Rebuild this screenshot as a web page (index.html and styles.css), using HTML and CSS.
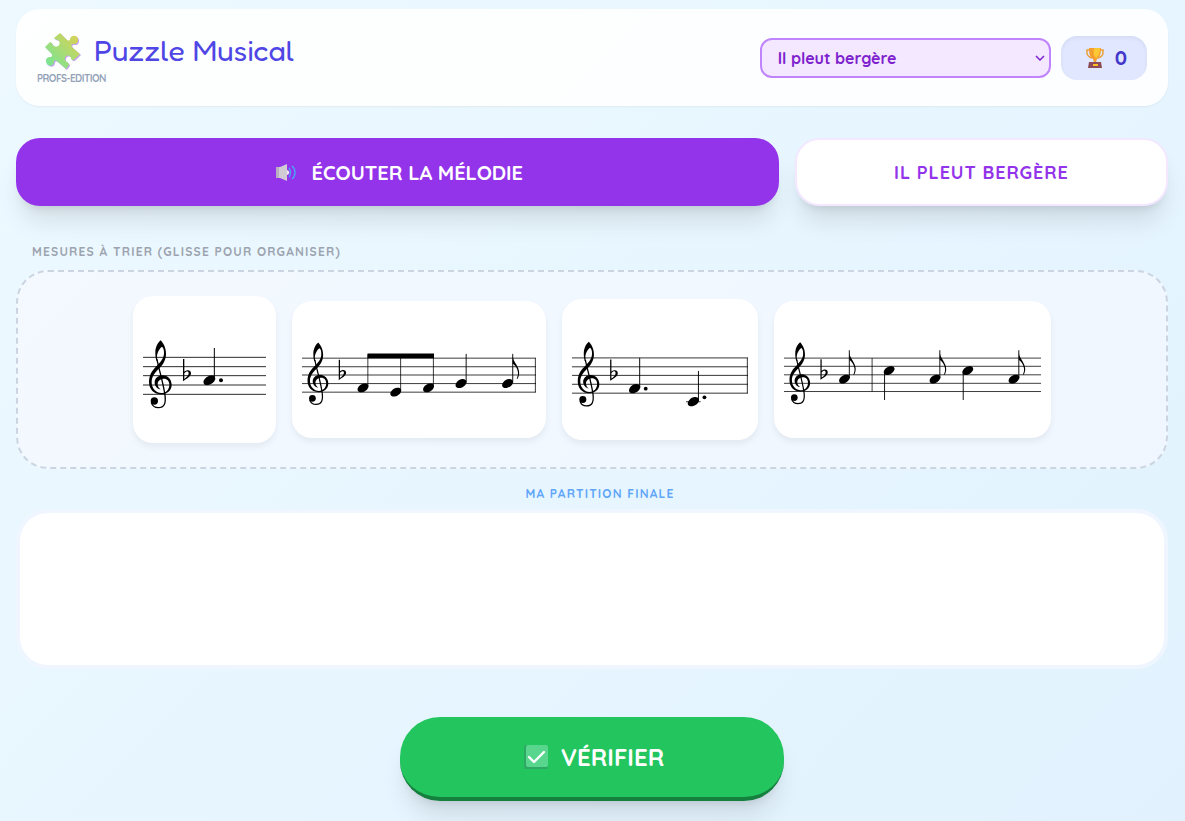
FILE: index.html
```html
<!DOCTYPE html>
<html lang="fr">
<head>
    <meta charset="UTF-8">
    <meta name="viewport" content="width=device-width, initial-scale=1.0">
    <title>Puzzle Musical</title>
    <link rel="stylesheet" href="styles.css">
</head>
<body>
    <!-- Shared music glyphs, one staff space = 28 units -->
    <svg class="glyphs" width="0" height="0" aria-hidden="true">
        <defs>
            <g id="clef">
                <path d="M53 103C62 112 70 128 69 146C68 166 57 179 46 190C34 202 26 213 26 228C26 248 40 261 55 261C69 261 79 250 79 236C79 224 71 217 61 218C50 219 43 227 44 236C45 243 48 247 53 250C44 250 35 240 35 230C35 217 46 208 58 208C74 208 86 220 86 237C86 254 72 265 54 265C33 265 18 250 18 228C18 209 26 195 38 183C52 168 63 158 63 140C63 131 61 125 57 122C48 128 42 142 42 152C42 156 43 160 44 164L40 164C38 156 37 150 37 140C37 124 44 110 53 103Z"/>
                <path d="M42 160C47 188 60 226 66 268C69 292 64 305 46 305C36 305 28 300 25 290" fill="none" stroke="#000" stroke-width="4"/>
                <circle cx="34" cy="285" r="11"/>
                <path fill-rule="evenodd" d="M120 159h4v38c7-6 20-7 20 5c0 10-13 16-24 24zM124 202v17c7-5 13-11 13-17c0-8-8-7-13 0z"/>
            </g>
            <path id="head" transform="scale(3.6) translate(-4.9 0)" d="M6.09-4.05c.36-.03 1.2 0 1.53.06c1.17.24 1.89.84 2.16 1.83c.06.18.06.3.06.66c0 .45 0 .63-.15 1.08c-.66 2.04-3.06 3.93-5.52 4.38c-.54.09-1.44.09-1.83.03c-1.23-.27-1.98-.87-2.25-1.86c-.06-.18-.06-.3-.06-.66c0-.45 0-.63.15-1.08c.24-.78.75-1.53 1.44-2.22c1.2-1.2 2.85-2.01 4.47-2.22z"/>
            <path id="flag" d="M0 8c2 20 21 32 21 54c0 8-2 13-5 19h-3c3-7 5-13 4-21c-1-12-10-24-17-28z"/>
        </defs>
    </svg>

    <div class="container">
        <header class="header">
            <div class="brand">
                <div class="brand-row">
                    <svg class="logo" viewBox="-3 1 48 44" aria-hidden="true">
                        <defs>
                            <linearGradient id="puzzle" x1="0" y1="1" x2="1" y2="0">
                                <stop offset="0" stop-color="#6ee79a"/>
                                <stop offset="1" stop-color="#e0d050"/>
                            </linearGradient>
                            <path id="piece" d="M20 5L26 11C28 13 30 13 30 11C31 6 39 7 38 13C37 17 34 16 32 16C31 17 31 18 33 20L40 26L35 31C33 33 31 32 31 30C30 26 24 27 25 32C26 34 29 34 29 37L26 41L18 34C16 32 14 32 14 34C14 39 6 39 6 33C6 29 9 29 11 29C13 28 12 26 11 25L5 19L10 14C12 14 12 17 14 18C18 20 21 16 19 13C18 11 15 12 14 10Z"/>
                        </defs>
                        <use href="#piece" x="1" y="1" fill="#c9a0f0"/>
                        <use href="#piece" fill="url(#puzzle)"/>
                    </svg>
                    <h1>Puzzle Musical</h1>
                </div>
                <span class="edition">PROFS-EDITION</span>
            </div>
            <div class="controls">
                <select id="songSelect" aria-label="Choisir une mélodie">
                    <option>Il pleut bergère</option>
                </select>
                <div class="score">
                    <svg class="trophy" viewBox="0 0 20 22" aria-hidden="true">
                        <path d="M5 3H2v3c0 3 2 4 5 5M15 3h3v3c0 3-2 4-5 5" fill="none" stroke="#e9a13b" stroke-width="1.5"/>
                        <path d="M4 1h12c0 6-1 9-4 11l-1 3h-2l-1-3C5 10 4 7 4 1z" fill="#f59e2e"/>
                        <path d="M9 1h6c0 5-1 8-4 10C9 9 8 6 9 1z" fill="#fcc934"/>
                        <path d="M4 15h12l1 6H3z" fill="#8d4a58"/>
                        <path d="M8 17h5v2H8z" fill="#fbbf24"/>
                    </svg>
                    <span id="score">0</span>
                </div>
            </div>
        </header>

        <div class="actions">
            <button class="listen" type="button">
                <svg class="speaker" viewBox="0 0 22 20" aria-hidden="true">
                    <path d="M1 5h4l7-3v17l-7-3H1z" fill="#d1cbd6"/>
                    <path d="M1 5h3v11H1z" fill="#b8b0c0"/>
                    <path d="M12 8c3 1 3 4 0 5z" fill="#eee"/>
                    <path d="M14 6c2 3 2 6 0 9M17 4c4 3 4 10 0 13" fill="none" stroke="#4aa3f5" stroke-width="1.4"/>
                </svg>
                <span>ÉCOUTER LA MÉLODIE</span>
            </button>
            <div class="song-title">IL PLEUT BERGÈRE</div>
        </div>

        <section>
            <h2 class="label">MESURES À TRIER (GLISSE POUR ORGANISER)</h2>
            <div class="pool">
                <div class="measure" draggable="true">
                    <svg width="123" height="127" viewBox="0 0 369 381">
                        <path class="line" d="M0 154H369M0 182H369M0 209H369M0 237H369M0 265H369"/>
                        <use href="#clef"/>
                        <use href="#head" x="199" y="223"/>
                        <path class="stem" d="M214 126V220"/>
                        <circle cx="234" cy="223" r="6"/>
                    </svg>
                </div>
                <div class="measure" draggable="true">
                    <svg width="234" height="117" viewBox="0 0 764 382">
                        <path class="line" d="M0 154H764M0 182H764M0 209H764M0 237H764M0 265H764M762 154V265"/>
                        <use href="#clef"/>
                        <use href="#head" x="199" y="251"/>
                        <use href="#head" x="306" y="265"/>
                        <use href="#head" x="413" y="251"/>
                        <use href="#head" x="519" y="237"/>
                        <use href="#head" x="671" y="237"/>
                        <path class="line" d="M215 142V248M322 142V262M429 142V248"/>
                        <path d="M214 139H431V154H214z"/>
                        <path class="stem" d="M536 140V234M688 140V234"/>
                        <use href="#flag" x="688" y="140"/>
                    </svg>
                </div>
                <div class="measure" draggable="true">
                    <svg width="176" height="121" viewBox="0 0 554 381">
                        <path class="line" d="M0 154H554M0 182H554M0 209H554M0 237H554M0 265H554M552 154V265M359 292H405"/>
                        <use href="#clef"/>
                        <use href="#head" x="197" y="251"/>
                        <path class="stem" d="M213 154V248M398 195V288"/>
                        <circle cx="232" cy="251" r="6"/>
                        <use href="#head" x="382" y="292"/>
                        <circle cx="417" cy="278" r="6"/>
                    </svg>
                </div>
                <div class="measure" draggable="true">
                    <svg width="257" height="117" viewBox="0 0 846 385">
                        <path class="line" d="M0 155H846M0 182H846M0 210H846M0 238H846M0 265H846M290 155V265"/>
                        <use href="#clef"/>
                        <use href="#head" x="199" y="224"/>
                        <use href="#head" x="346" y="196"/>
                        <use href="#head" x="497" y="224"/>
                        <use href="#head" x="605" y="196"/>
                        <use href="#head" x="757" y="224"/>
                        <path class="stem" d="M215 129V221M331 199V293M513 129V221M590 199V293M773 129V221"/>
                        <use href="#flag" x="215" y="129"/>
                        <use href="#flag" x="513" y="129"/>
                        <use href="#flag" x="773" y="129"/>
                    </svg>
                </div>
            </div>
        </section>

        <section>
            <h2 class="label label-final">MA PARTITION FINALE</h2>
            <div class="drop-zone"></div>
        </section>

        <button class="verify" type="button">
            <svg class="check" viewBox="0 0 24 24" aria-hidden="true">
                <rect width="24" height="24" rx="2" fill="#2fa866"/>
                <rect x="2" width="22" height="22" rx="2" fill="#58d68d"/>
                <path d="M5 12l5 5L20 7" fill="none" stroke="#fff" stroke-width="2.4" stroke-linecap="round" stroke-linejoin="round"/>
            </svg>
            <span>VÉRIFIER</span>
        </button>
    </div>
</body>
</html>
```

FILE: styles.css
```css
* {
    margin: 0;
    padding: 0;
    box-sizing: border-box;
}

body {
    min-height: 100vh;
    padding: 9px 17px 20px 16px;
    background: linear-gradient(135deg, #edf9ff, #e1f2fe);
    font-family: Quicksand, Lato, sans-serif;
    font-weight: 700;
}

.glyphs {
    position: absolute;
}

.container {
    max-width: 1152px;
    margin: 0 auto;
}

.header {
    display: flex;
    justify-content: space-between;
    align-items: center;
    padding: 20px 21px;
    margin-bottom: 32px;
    border-radius: 24px;
    background: rgba(255, 255, 255, 0.9);
    box-shadow: 0 1px 2px rgba(0, 0, 0, 0.05);
}

.brand {
    padding-bottom: 2px;
}

.brand-row {
    display: flex;
    align-items: center;
    gap: 9px;
}

.logo {
    width: 48px;
    height: 44px;
}

h1 {
    padding-bottom: 2px;
    color: #4f46e5;
    font-family: "Fredoka One", Fredoka, Lato, sans-serif;
    font-size: 30px;
    font-weight: 400;
    line-height: 40px;
}

.edition {
    display: block;
    color: #94a3b8;
    font-size: 10px;
    line-height: 11px;
    letter-spacing: -0.05em;
}

.controls {
    display: flex;
    align-items: center;
    gap: 10px;
}

select {
    width: 291px;
    height: 40px;
    padding: 0 16px;
    border: 2px solid #c084fc;
    border-radius: 12px;
    appearance: none;
    background: #f3e8ff url("data:image/svg+xml,%3Csvg xmlns='http://www.w3.org/2000/svg' width='10' height='6' fill='none' stroke='%237e22ce' stroke-width='1.5'%3E%3Cpath d='M1 1l4 4 4-4'/%3E%3C/svg%3E") no-repeat right 4px center;
    color: #7e22ce;
    font: inherit;
    font-size: 16px;
}

.score {
    display: flex;
    align-items: center;
    gap: 10px;
    height: 44px;
    padding: 0 20px 0 24px;
    border-radius: 16px;
    background: #e0e7ff;
    box-shadow: inset 0 2px 4px rgba(0, 0, 0, 0.05);
    color: #4338ca;
    font-size: 20px;
}

.trophy {
    width: 20px;
    height: 22px;
}

.actions {
    display: grid;
    grid-template-columns: repeat(3, 1fr);
    gap: 16px;
    margin-bottom: 38px;
}

.listen,
.song-title {
    display: flex;
    align-items: center;
    justify-content: center;
    height: 68px;
    border-radius: 24px;
    box-shadow: 0 20px 25px -5px rgba(0, 0, 0, 0.1), 0 8px 10px -6px rgba(0, 0, 0, 0.1);
}

.listen {
    grid-column: span 2;
    gap: 15px;
    padding-left: 3px;
    border: none;
    background: #9333ea;
    color: #fff;
    font: inherit;
    font-size: 20px;
    cursor: pointer;
}

.speaker {
    width: 22px;
    height: 20px;
}

.song-title {
    border: 2px solid #f3e8ff;
    background: #fff;
    color: #9333ea;
    font-size: 18px;
    letter-spacing: 0.05em;
}

.label {
    margin: 0 16px 10px;
    color: #9ca3af;
    font-size: 12px;
    line-height: 16px;
    letter-spacing: 0.1em;
}

.label-final {
    margin: 17px 0 7px;
    padding-left: 16px;
    color: #60a5fa;
    text-align: center;
}

.pool {
    display: flex;
    flex-wrap: wrap;
    align-items: center;
    justify-content: center;
    gap: 16px;
    min-height: 199px;
    padding: 24px;
    border: 2px dashed #cbd5e1;
    border-radius: 32px;
    background: rgba(252, 249, 255, 0.5);
}

.measure {
    padding: 10px;
    border-radius: 20px;
    background: #fff;
    box-shadow: 0 4px 6px rgba(0, 0, 0, 0.06);
    cursor: grab;
}

.measure svg {
    display: block;
}

.line,
.stem {
    fill: none;
    stroke: #000;
    stroke-width: 2.5;
}

.stem {
    stroke-width: 3;
}

.drop-zone {
    min-height: 160px;
    border: 4px solid #eff6ff;
    border-radius: 32px;
    background: #fff;
}

.verify {
    display: flex;
    align-items: center;
    justify-content: center;
    gap: 13px;
    width: 384px;
    max-width: 100%;
    height: 84px;
    margin: 48px auto 0;
    padding-left: 4px;
    border: none;
    border-bottom: 4px solid #15803d;
    border-radius: 40px;
    background: #22c55e;
    box-shadow: 0 20px 25px -5px rgba(0, 0, 0, 0.1), 0 8px 10px -6px rgba(0, 0, 0, 0.1);
    color: #fff;
    font: inherit;
    font-size: 24px;
    cursor: pointer;
}

.check {
    width: 24px;
    height: 24px;
}
```
